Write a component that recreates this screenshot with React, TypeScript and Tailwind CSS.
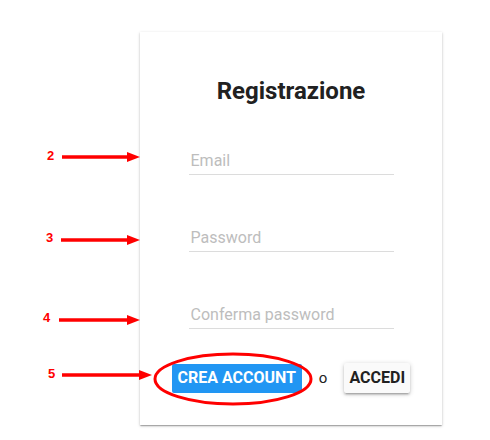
const arrows = [
  { label: "2", y: 157, x1: 62, x2: 140, nx: 47, ny: 149 },
  { label: "3", y: 240, x1: 61, x2: 140, nx: 46, ny: 231 },
  { label: "4", y: 320, x1: 59, x2: 140, nx: 43, ny: 311 },
  { label: "5", y: 375, x1: 62, x2: 152, nx: 48, ny: 367 },
];

function Field({ placeholder, type }: { placeholder: string; type: string }) {
  return (
    <input
      type={type}
      placeholder={placeholder}
      className="box-border h-[28px] w-[205px] border-b border-[#dcdcdc] bg-transparent px-[2px] text-[16px] text-[#212121] outline-none placeholder:text-[#bdbdbd]"
    />
  );
}

export default function App() {
  return (
    <div className="relative h-[440px] w-[490px] overflow-hidden bg-white font-['Roboto',sans-serif]">
      <div className="pl-[140px] pt-[32px]">
        <div className="flex h-[393px] w-[302px] flex-col items-center bg-white shadow-[0_1px_3px_rgba(0,0,0,0.2),0_1px_1px_rgba(0,0,0,0.14),0_2px_1px_-1px_rgba(0,0,0,0.12)]">
          <h1 className="mt-[45px] text-[24px] font-bold leading-[28px] text-[#212121]">
            Registrazione
          </h1>
          <div className="mt-[42px] flex flex-col gap-[49px]">
            <Field placeholder="Email" type="email" />
            <Field placeholder="Password" type="password" />
            <Field placeholder="Conferma password" type="password" />
          </div>
          <div className="mt-[34px] flex items-center gap-[17px]">
            <button className="h-[29px] w-[130px] rounded-[2px] bg-[#2196f3] text-[16px] font-bold text-white">
              CREA ACCOUNT
            </button>
            <span className="text-[15px] text-[#212121]">o</span>
            <button className="h-[30px] w-[66px] rounded-[2px] bg-[#fafafa] text-[16px] font-bold text-[#212121] shadow-[0_1px_5px_rgba(0,0,0,0.2),0_2px_2px_rgba(0,0,0,0.14),0_3px_1px_-2px_rgba(0,0,0,0.12)]">
              ACCEDI
            </button>
          </div>
        </div>
      </div>

      {/* annotations drawn on top of the screenshot */}
      <svg className="pointer-events-none absolute left-0 top-0" width="490" height="440">
        {arrows.map((a) => (
          <g key={a.label} fill="#ff0000" stroke="#ff0000">
            <line x1={a.x1} y1={a.y} x2={a.x2 - 10} y2={a.y} strokeWidth="3.5" />
            <polygon points={`${a.x2 - 13},${a.y - 5} ${a.x2},${a.y} ${a.x2 - 13},${a.y + 5}`} strokeWidth="0" />
          </g>
        ))}
        <ellipse cx="233" cy="379" rx="78" ry="25" fill="none" stroke="#ff0000" strokeWidth="3" />
      </svg>
      {arrows.map((a) => (
        <span
          key={a.label}
          className="absolute font-['Liberation_Sans',sans-serif] text-[13px] font-bold leading-[13px] text-[#ff0000]"
          style={{ left: a.nx, top: a.ny }}
        >
          {a.label}
        </span>
      ))}
    </div>
  );
}
